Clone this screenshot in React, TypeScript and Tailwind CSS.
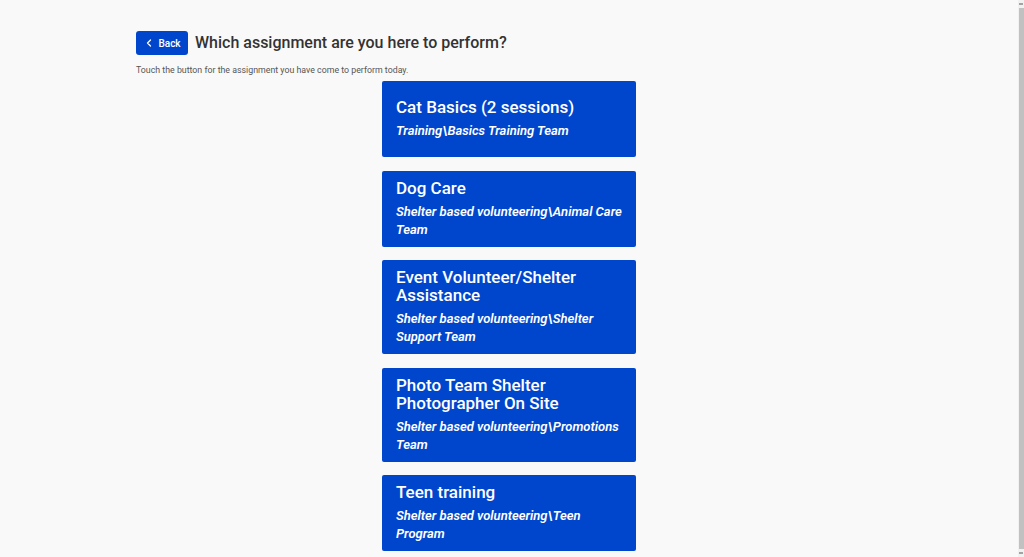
import { ChevronLeft } from "lucide-react";

const assignments = [
  { title: "Cat Basics (2 sessions)", team: "Training\\Basics Training Team" },
  { title: "Dog Care", team: "Shelter based volunteering\\Animal Care Team" },
  { title: "Event Volunteer/Shelter Assistance", team: "Shelter based volunteering\\Shelter Support Team" },
  { title: "Photo Team Shelter Photographer On Site", team: "Shelter based volunteering\\Promotions Team" },
  { title: "Teen training", team: "Shelter based volunteering\\Teen Program" },
];

export default function App() {
  return (
    <div
      className="flex h-[557px] overflow-hidden bg-[#f9f9f9] text-[#333]"
      style={{ fontFamily: "Roboto, 'Liberation Sans', sans-serif" }}
    >
      <div className="flex-1">
        <div className="mx-auto w-[746px] pt-[31px] pb-[20px]">
          <div className="flex items-center gap-[7px]">
            <button className="flex h-6 w-[52px] items-center justify-center gap-[3px] rounded-[3px] bg-[#0046cc] text-[10px] font-medium text-white">
              <ChevronLeft className="h-3 w-3" strokeWidth={2.5} />
              Back
            </button>
            <h1 className="text-[16px] font-medium leading-6 text-[#333]">
              Which assignment are you here to perform?
            </h1>
          </div>
          <p className="mt-[9px] text-[8.8px] leading-3 text-[#555]">
            Touch the button for the assignment you have come to perform today.
          </p>
          <div className="mt-[5px] flex flex-col items-center gap-[13.5px]">
            {assignments.map((a) => (
              <button
                key={a.title}
                className="flex min-h-[76px] w-[254px] flex-col justify-center rounded-[2px] bg-[#0046cc] px-[14px] py-2 text-left text-white"
              >
                <span className="text-[17px] font-medium leading-[18px]">{a.title}</span>
                <span className="mt-[6px] text-[13px] font-semibold italic leading-[18px]">{a.team}</span>
              </button>
            ))}
          </div>
        </div>
      </div>
      {/* scrollbar */}
      <div className="flex w-[6px] flex-col bg-[#f1f1f1]">
        <div className="mx-auto mt-[3px] h-[2px] w-[4px] bg-[#a3a3a3]" />
        <div className="mx-auto my-[3px] w-[5px] flex-1 bg-[#c1c1c1]" />
        <div className="mx-auto mb-[3px] h-[2px] w-[4px] bg-[#a3a3a3]" />
      </div>
    </div>
  );
}
